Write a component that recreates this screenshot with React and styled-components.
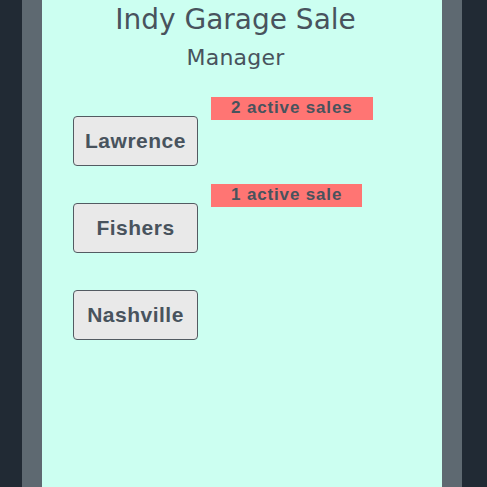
import React from "react";
import styled, { createGlobalStyle } from "styled-components";

const GlobalStyle = createGlobalStyle`
  html, body {
    margin: 0;
    padding: 0;
    background: #212a34;
  }
`;

const sales = [
  { city: "Lawrence", active: 2 },
  { city: "Fishers", active: 1 },
  { city: "Nashville", active: 0 },
];

function App() {
  return (
    <>
      <GlobalStyle />
      <Page>
        <Frame>
          <Panel>
            <Header>
              <Title>Indy Garage Sale</Title>
              <Subtitle>Manager</Subtitle>
            </Header>
            <List>
              {sales.map((s) => (
                <Row key={s.city}>
                  <CityButton type="button">{s.city}</CityButton>
                  {s.active > 0 && (
                    <Badge>
                      {s.active} active {s.active === 1 ? "sale" : "sales"}
                    </Badge>
                  )}
                </Row>
              ))}
            </List>
          </Panel>
        </Frame>
      </Page>
    </>
  );
}

export default App;

/* ===== styles ===== */
const Page = styled.div`
  display: flex;
  min-height: 487px;
  padding-left: 22px;
`;

const Frame = styled.div`
  width: 440px;
  background: #5e6971;
  padding: 0 20px;
  box-sizing: border-box;
  display: flex;
`;

const Panel = styled.div`
  flex: 1;
  background: #ccfff1;
  min-height: 487px;
`;

const Header = styled.div`
  display: flex;
  flex-direction: column;
  align-items: center;
  padding-right: 13px;
  font-family: "DejaVu Sans", Verdana, sans-serif;
  color: #48535d;
`;

const Title = styled.h1`
  margin: 2px 0 0;
  font-size: 28px;
  font-weight: normal;
  line-height: 36px;
`;

const Subtitle = styled.h2`
  margin: 6px 0 0;
  font-size: 22px;
  font-weight: normal;
  line-height: 28px;
  letter-spacing: 0.2px;
`;

const List = styled.div`
  display: flex;
  flex-direction: column;
  gap: 18px;
  padding: 25px 0 0 31px;
`;

const Row = styled.div`
  display: flex;
  align-items: flex-start;
  gap: 13px;
`;

const CityButton = styled.button`
  margin-top: 19px;
  width: 125px;
  height: 50px;
  padding: 0;
  background: #e9e9e9;
  border: 1px solid #535b62;
  border-radius: 4px;
  font-family: "Liberation Sans", Arial, sans-serif;
  font-weight: bold;
  font-size: 21px;
  letter-spacing: 0.5px;
  color: #48535d;
  cursor: pointer;
`;

const Badge = styled.div`
  background: #ff7573;
  padding: 0 20px;
  height: 23px;
  line-height: 22px;
  font-family: "Liberation Sans", Arial, sans-serif;
  font-weight: bold;
  font-size: 17px;
  letter-spacing: 0.85px;
  color: #48535d;
`;
